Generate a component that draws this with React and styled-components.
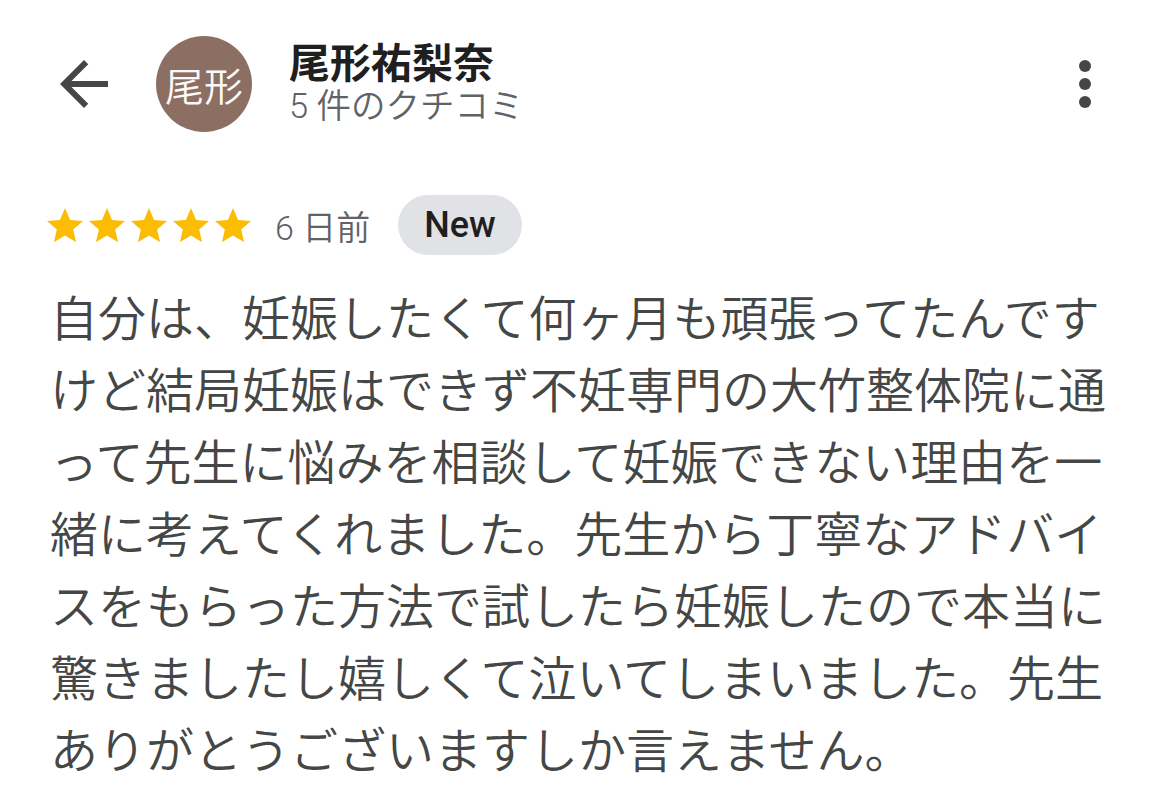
import React from "react";
import styled, { createGlobalStyle } from "styled-components";

const GlobalStyle = createGlobalStyle`
  html, body {
    margin: 0;
    padding: 0;
    background: #ffffff;
  }
  body {
    font-family: Roboto, "Noto Sans CJK JP", sans-serif;
  }
`;

const review = {
  author: "尾形祐梨奈",
  initials: "尾形",
  count: "5 件のクチコミ",
  rating: 5,
  date: "6 日前",
  lines: [
    "自分は、妊娠したくて何ヶ月も頑張ってたんです",
    "けど結局妊娠はできず不妊専門の大竹整体院に通",
    "って先生に悩みを相談して妊娠できない理由を一",
    "緒に考えてくれました。先生から丁寧なアドバイ",
    "スをもらった方法で試したら妊娠したので本当に",
    "驚きましたし嬉しくて泣いてしまいました。先生",
    "ありがとうございますしか言えません。",
  ],
};

class App extends React.Component {
  render() {
    return (
      <Page>
        <GlobalStyle />
        <Header>
          <IconButton aria-label="back">
            <svg width="72" height="72" viewBox="0 0 24 24">
              <path
                fill="#444746"
                d="M20 11H7.83l5.59-5.59L12 4l-8 8 8 8 1.41-1.41L7.83 13H20v-2z"
              />
            </svg>
          </IconButton>
          <Avatar>{review.initials}</Avatar>
          <Who>
            <Name>{review.author}</Name>
            <Count>{review.count}</Count>
          </Who>
          <IconButton aria-label="more">
            <svg width="72" height="72" viewBox="0 0 24 24">
              <circle cx="12" cy="6" r="2" fill="#444746" />
              <circle cx="12" cy="12" r="2" fill="#444746" />
              <circle cx="12" cy="18" r="2" fill="#444746" />
            </svg>
          </IconButton>
        </Header>

        <MetaRow>
          <Stars>
            {Array.from({ length: review.rating }).map((_, i) => (
              <svg key={i} width="36" height="34.2" viewBox="2 2 20 19">
                <path
                  fill="#fbbc04"
                  d="M12 17.27L18.18 21l-1.64-7.03L22 9.24l-7.19-.61L12 2 9.19 8.63 2 9.24l5.46 4.73L5.82 21z"
                />
              </svg>
            ))}
          </Stars>
          <DateText>{review.date}</DateText>
          <Badge>New</Badge>
        </MetaRow>

        <Body>
          {review.lines.map((line, i) => (
            <Line key={i}>{line}</Line>
          ))}
        </Body>
      </Page>
    );
  }
}

export default App;

const Page = styled.div`
  width: 1170px;
  height: 799px;
  overflow: hidden;
  background: #ffffff;
  box-sizing: border-box;
  padding: 36px 49px 0 48px;
`;

const Header = styled.div`
  display: flex;
  align-items: center;
  height: 96px;
`;

const IconButton = styled.div`
  width: 72px;
  height: 72px;
  display: flex;
  align-items: center;
  justify-content: center;
  flex: none;

  svg {
    display: block;
  }
`;

const Avatar = styled.div`
  width: 96px;
  height: 96px;
  border-radius: 50%;
  background: #8d6e63;
  color: #fafafa;
  display: flex;
  align-items: center;
  justify-content: center;
  font-family: "Noto Sans CJK JP", sans-serif;
  font-weight: 350;
  font-size: 39px;
  margin-left: 36px;
  flex: none;
`;

const Who = styled.div`
  flex: 1;
  display: flex;
  flex-direction: column;
  margin-left: 37px;
  margin-top: -2px;
`;

const Name = styled.div`
  font-family: "Noto Sans CJK JP", sans-serif;
  font-weight: 700;
  font-size: 41px;
  line-height: 46px;
  color: #1f1f1f;
`;

const Count = styled.div`
  font-family: Roboto, "Noto Sans CJK JP", sans-serif;
  font-weight: 350;
  font-size: 34.5px;
  line-height: 46px;
  color: #5f6368;
`;

const MetaRow = styled.div`
  display: flex;
  align-items: center;
  margin-top: 63px;
  height: 60px;
`;

const Stars = styled.div`
  display: flex;
  gap: 6px;
  margin-left: -1px;

  svg {
    display: block;
  }
`;

const DateText = styled.span`
  font-weight: 350;
  font-size: 34px;
  color: #5f6368;
  margin-left: 24px;
`;

const Badge = styled.span`
  height: 60px;
  border-radius: 30px;
  background: #e0e2e6;
  color: #1f1f1f;
  font-size: 36px;
  font-weight: 500;
  display: flex;
  align-items: center;
  padding: 0 26px;
  margin-left: 28px;
`;

const Body = styled.div`
  margin-top: 24px;
  margin-left: 2px;
  font-family: "Noto Sans CJK JP", sans-serif;
  font-weight: 350;
  font-size: 48px;
  line-height: 72px;
  color: #444746;
`;

const Line = styled.div`
  white-space: nowrap;
`;
